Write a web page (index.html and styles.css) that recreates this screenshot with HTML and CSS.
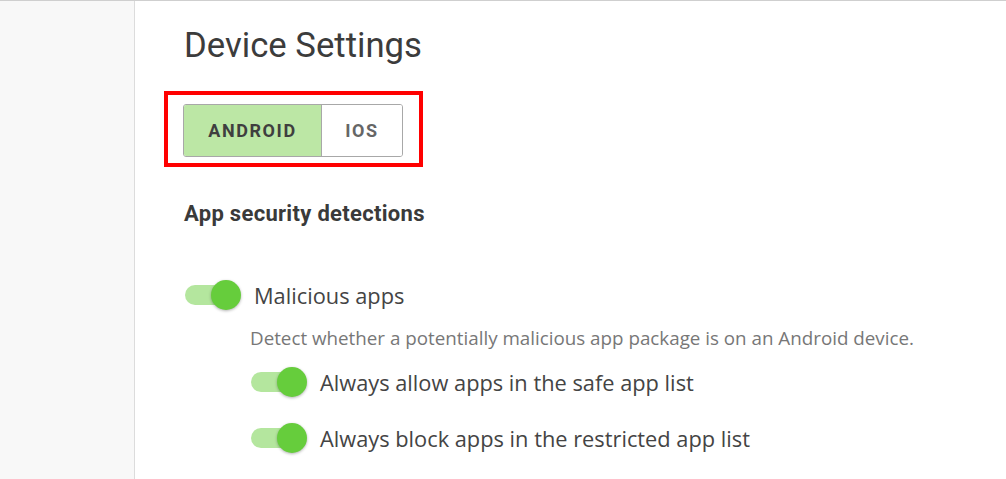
FILE: index.html
```html
<!DOCTYPE html>
<html lang="en">
<head>
<meta charset="utf-8">
<title>Device Settings</title>
<link rel="stylesheet" href="styles.css">
</head>
<body>
<div class="app">
  <aside class="sidebar"></aside>
  <main class="main">
    <h1 class="title">Device Settings</h1>
    <div class="highlight">
      <div class="seg">
        <button class="seg-btn active">ANDROID</button>
        <button class="seg-btn">IOS</button>
      </div>
    </div>
    <h2 class="section">App security detections</h2>
    <div class="setting">
      <div class="row">
        <span class="switch"><span class="knob"></span></span>
        <span class="label">Malicious apps</span>
      </div>
      <p class="desc">Detect whether a potentially malicious app package is on an Android device.</p>
      <div class="sub">
        <div class="row">
          <span class="switch"><span class="knob"></span></span>
          <span class="label">Always allow apps in the safe app list</span>
        </div>
        <div class="row">
          <span class="switch"><span class="knob"></span></span>
          <span class="label">Always block apps in the restricted app list</span>
        </div>
      </div>
    </div>
  </main>
</div>
</body>
</html>
```

FILE: styles.css
```css
* { box-sizing: border-box; }
html, body { margin: 0; padding: 0; background: #fff; }
body {
  font-family: "Open Sans", "Noto Sans", sans-serif;
  color: #444;
  border-top: 1px solid #cfcfcf;
  height: 479px;
  overflow: hidden;
}
.app { display: flex; height: 100%; }
.sidebar {
  width: 135px;
  flex: none;
  background: #f8f8f8;
  border-right: 1px solid #dcdcdc;
}
.main {
  flex: 1;
  padding: 24px 0 0 49px;
  display: flex;
  flex-direction: column;
  align-items: flex-start;
}
.title {
  margin: 0;
  font-family: Roboto, "Open Sans", sans-serif;
  font-weight: 400;
  font-size: 34.7px;
  line-height: 40px;
  color: #3c3c3c;
}
.highlight {
  margin: 26px 0 0 -20px;
  border: 4px solid #ff0000;
  padding: 9px 16px 6px 15px;
}
.seg {
  display: flex;
  border: 1px solid #a8a8a8;
  border-radius: 3px;
  overflow: hidden;
  height: 53px;
}
.seg-btn {
  border: 0;
  margin: 0;
  background: #fff;
  font-family: Roboto, "Open Sans", sans-serif;
  font-weight: 700;
  font-size: 18px;
  letter-spacing: 1.6px;
  color: #666;
  padding: 0;
  height: 100%;
}
.seg-btn.active {
  background: #bce7a5;
  color: #3f3f3f;
  border-right: 1px solid #a8a8a8;
  width: 138px;
}
.seg-btn:last-child { width: 80px; }
.section {
  margin: 33px 0 0 0;
  font-family: Roboto, "Open Sans", sans-serif;
  font-weight: 700;
  font-size: 22px;
  letter-spacing: 0.3px;
  line-height: 28px;
  color: #3a3a3a;
}
.setting { margin-top: 52px; }
.row {
  display: flex;
  align-items: center;
  height: 30px;
}
.switch {
  position: relative;
  width: 51px;
  height: 20px;
  border-radius: 10px;
  background: #b4e69e;
  flex: none;
  margin-left: 1px;
}
.knob {
  position: absolute;
  left: 26px;
  top: -5px;
  width: 30px;
  height: 30px;
  border-radius: 50%;
  background: #66cd3c;
  box-shadow: 0 1px 3px rgba(0,0,0,0.3);
}
.label {
  margin-left: 18px;
  font-size: 21.8px;
  color: #444;
}
.desc {
  margin: 15px 0 0 66px;
  font-size: 18.8px;
  line-height: 26px;
  color: #777;
}
.sub {
  margin: 16px 0 0 66px;
  display: flex;
  flex-direction: column;
  gap: 26px;
}
.sub .label { margin-left: 18px; }
```
